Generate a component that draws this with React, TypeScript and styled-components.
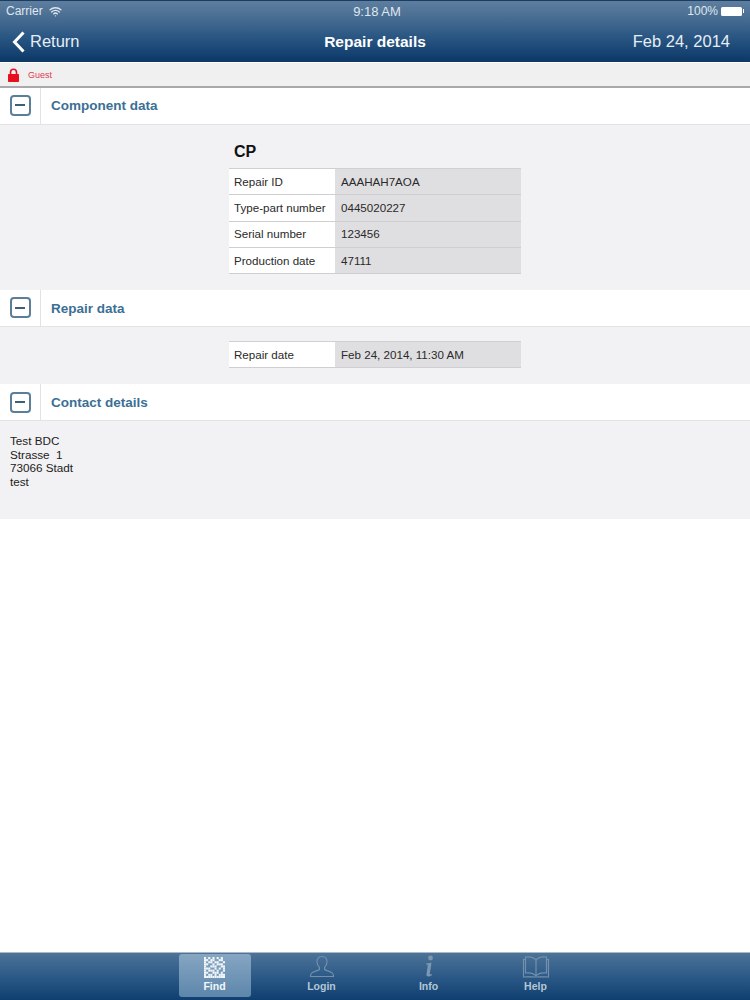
import React from 'react';
import styled, { createGlobalStyle } from 'styled-components';
import { Wifi } from 'lucide-react';

const GlobalStyle = createGlobalStyle`
  html, body {
    margin: 0;
    padding: 0;
    background: #fff;
    font-family: "Liberation Sans", Arial, sans-serif;
  }
`;

const Page = styled.div`
  width: 750px;
  height: 1000px;
  display: flex;
  flex-direction: column;
  overflow: hidden;
  background: #fff;
`;

const Header = styled.header`
  height: 62px;
  flex: none;
  box-sizing: border-box;
  border-top: 1px solid #1c3c62;
  border-bottom: 1px solid #123a63;
  background: linear-gradient(#5d7e9f 0%, #4b6f93 25%, #2a5683 60%, #0c3968 100%);
  color: #fff;
  display: flex;
  flex-direction: column;
`;

const StatusBar = styled.div`
  height: 20px;
  padding: 0 6px;
  display: flex;
  align-items: center;
  justify-content: space-between;
  font-size: 12px;
  color: #dfe7ef;
  position: relative;
`;

const StatusGroup = styled.div<{ $gap: number }>`
  display: flex;
  align-items: center;
  gap: ${(p) => p.$gap}px;
`;

const Clock = styled.span`
  position: absolute;
  left: 4px;
  right: 0;
  text-align: center;
  font-size: 13px;
`;

const Battery = styled.span`
  width: 21px;
  height: 9px;
  border-radius: 1.5px;
  background: #fff;
  margin-right: 2px;
  position: relative;

  &::after {
    content: '';
    position: absolute;
    right: -2px;
    top: 2px;
    width: 1px;
    height: 4px;
    background: #fff;
  }
`;

const NavBar = styled.div`
  flex: 1;
  display: grid;
  grid-template-columns: 1fr auto 1fr;
  align-items: center;
  padding: 1px 20px 0;
`;

const BackLink = styled.div`
  display: flex;
  align-items: center;
  margin-left: -8px;
  font-size: 16.5px;
  color: #e6edf4;
  gap: 5px;
`;

const NavTitle = styled.div`
  font-size: 15.5px;
  font-weight: bold;
  color: #fff;
`;

const NavDate = styled.div`
  font-size: 16.5px;
  text-align: right;
  color: #e6edf4;
`;

const UserBar = styled.div`
  height: 23px;
  flex: none;
  margin-top: 1px;
  background: #f1f0f1;
  border-bottom: 2px solid #a9a9ab;
  display: flex;
  align-items: center;
  padding-left: 7px;
  gap: 8px;
  font-size: 9px;
  color: #df3c4e;
`;

const SectionHead = styled.div`
  height: 36px;
  flex: none;
  background: #fff;
  border-bottom: 1px solid #e4e4e6;
  display: flex;
  align-items: stretch;
`;

const ToggleCell = styled.div`
  width: 41px;
  flex: none;
  box-sizing: border-box;
  border-right: 1px solid #e2e2e4;
  display: flex;
  align-items: center;
  justify-content: center;
`;

const ToggleBox = styled.div<{ $lift: number }>`
  width: 21px;
  height: 21px;
  margin-bottom: ${(p) => p.$lift}px;
  box-sizing: border-box;
  border: 2px solid #5b7f99;
  border-radius: 4px;
  display: flex;
  align-items: center;
  justify-content: center;

  &::before {
    content: '';
    width: 10px;
    height: 2px;
    background: #3c5f7b;
  }
`;

const SectionTitle = styled.div<{ $lift: number }>`
  padding: 0 0 ${(p) => p.$lift}px 10px;
  display: flex;
  align-items: center;
  font-size: 13.5px;
  font-weight: bold;
  color: #3b6f95;
`;

const SectionBody = styled.div<{ $height: number }>`
  height: ${(p) => p.$height}px;
  flex: none;
  box-sizing: border-box;
  background: #f2f1f3;
`;

const TableWrap = styled.div<{ $top: number }>`
  width: 292px;
  margin-left: 229px;
  padding-top: ${(p) => p.$top}px;
`;

const TableTitle = styled.div`
  font-size: 16px;
  font-weight: bold;
  color: #111;
  padding: 1px 0 0 5px;
  height: 27px;
  line-height: 22px;
`;

const Table = styled.div`
  border-top: 1px solid #d0d0d2;
`;

const Row = styled.div`
  display: grid;
  grid-template-columns: 106px 186px;
  height: 25.3px;
  border-bottom: 1px solid #cfcfd1;
  font-size: 11.6px;
  color: #2a2a2a;
`;

const LabelCell = styled.div`
  background: #fff;
  padding: 0 0 1px 5px;
  display: flex;
  align-items: center;
`;

const ValueCell = styled.div`
  background: #dfdee0;
  padding: 0 0 1px 6px;
  display: flex;
  align-items: center;
`;

const Address = styled.div`
  padding: 13px 0 0 10px;
  font-size: 11.7px;
  line-height: 13.7px;
  color: #222;
  white-space: pre;
`;

const Spacer = styled.div`
  flex: 1;
`;

const TabBar = styled.nav`
  height: 48px;
  flex: none;
  box-sizing: border-box;
  border-top: 1px solid #a9b9c6;
  background: linear-gradient(#4d7397 0%, #2f5c89 45%, #0f3f70 100%);
  display: flex;
  justify-content: center;
  padding: 1px 0 3px 0;
  gap: 35px;
`;

const Tab = styled.div<{ $active?: boolean }>`
  width: 72px;
  border-radius: 3px;
  background: ${(p) => (p.$active ? 'linear-gradient(#86a6c3, #5d86aa)' : 'transparent')};
  display: flex;
  flex-direction: column;
  align-items: center;
  justify-content: flex-end;
  font-size: 10.5px;
  font-weight: bold;
  color: ${(p) => (p.$active ? '#f2f6fa' : '#b4c6d6')};
  padding-bottom: 5px;
  box-sizing: border-box;
  gap: 2px;
`;

const BackChevron = () => (
  <svg width="13" height="22" viewBox="0 0 13 22" fill="none" stroke="#fff" strokeWidth="3">
    <polyline points="11.500,1.500 2.500,11 11.500,20.500" />
  </svg>
);

const Lock = () => (
  <svg width="13" height="14" viewBox="0 0 13 14">
    <path d="M3.500 6.500V4.200a3 3 0 0 1 6 0v2.300" fill="none" stroke="#e8101f" strokeWidth="1.600" />
    <rect x="1" y="6" width="11" height="8" rx="0.800" fill="#e8101f" />
  </svg>
);

// data matrix code, cells are hand placed from the reference
const matrix = [
  '1010101010',
  '1101100110',
  '1011011001',
  '1100101110',
  '1001110011',
  '1110010101',
  '1011101001',
  '1100111010',
  '1011010111',
  '1111111111',
];

const FindIcon = () => (
  <svg width="21" height="21" viewBox="0 0 20 20">
    {matrix.map((row, y) =>
      row.split('').map((c, x) =>
        c === '1' ? <rect key={`${x}-${y}`} x={x * 2} y={y * 2} width="2" height="2" fill="#f1f5f9" /> : null,
      ),
    )}
  </svg>
);

const LoginIcon = () => (
  <svg width="26" height="23" viewBox="0 0 26 23" fill="none" stroke="#7390ab" strokeWidth="1.200">
    <path d="M13 1.500c-3.200 0-5 2.300-5 5.300 0 2.400 1 4.400 2.400 5.500v2.200c-1.400 1.200-6.600 2-8.200 4-.6.800-.7 2-.7 3h23c0-1-.1-2.200-.7-3-1.600-2-6.800-2.800-8.200-4v-2.200C17 11.200 18 9.200 18 6.800c0-3-1.800-5.300-5-5.300z" />
  </svg>
);

const InfoIcon = () => (
  <svg width="14" height="23" viewBox="0 0 14 23" fill="#7c97b0">
    <circle cx="8.500" cy="3" r="2.400" />
    <path d="M4 8.500l5.500-.8-1.700 11c-.1.800.4 1 2.200.300l-.2 1.200c-2.400 1.600-5.800 2-5.300-1l1.300-9c.1-.7-.6-.8-1.800-.7z" />
  </svg>
);

const HelpIcon = () => (
  <svg width="28" height="23" viewBox="0 0 28 23" fill="none" stroke="#7390ab" strokeWidth="1.200">
    <path d="M14 5c-2-2.500-6-3.500-10.500-3v16c4.500-.5 8.500.5 10.500 3 2-2.500 6-3.500 10.500-3V2C20 1.500 16 2.500 14 5z" />
    <path d="M14 5v16M3.500 4.500H1.500v17.500c4-.5 9 0 12.500 0s8.500-.5 12.500 0V4.500h-2" />
  </svg>
);

const Section = ({ title, lift = 0, titleLift = 0 }: { title: string; lift?: number; titleLift?: number }) => (
  <SectionHead>
    <ToggleCell>
      <ToggleBox $lift={lift} />
    </ToggleCell>
    <SectionTitle $lift={titleLift}>{title}</SectionTitle>
  </SectionHead>
);

const componentRows = [
  ['Repair ID', 'AAAHAH7AOA'],
  ['Type-part number', '0445020227'],
  ['Serial number', '123456'],
  ['Production date', '47111'],
];

export default function App() {
  return (
    <Page>
      <GlobalStyle />
      <Header>
        <StatusBar>
          <StatusGroup $gap={6}>
            Carrier
            <Wifi size={13} strokeWidth={2.500} />
          </StatusGroup>
          <Clock>9:18 AM</Clock>
          <StatusGroup $gap={3}>
            100%
            <Battery />
          </StatusGroup>
        </StatusBar>
        <NavBar>
          <BackLink>
            <BackChevron />
            Return
          </BackLink>
          <NavTitle>Repair details</NavTitle>
          <NavDate>Feb 24, 2014</NavDate>
        </NavBar>
      </Header>
      <UserBar>
        <Lock />
        Guest
      </UserBar>

      <Section title="Component data" lift={2} titleLift={2} />
      <SectionBody $height={165}>
        <TableWrap $top={15}>
          <TableTitle>CP</TableTitle>
          <Table>
            {componentRows.map(([label, value]) => (
              <Row key={label}>
                <LabelCell>{label}</LabelCell>
                <ValueCell>{value}</ValueCell>
              </Row>
            ))}
          </Table>
        </TableWrap>
      </SectionBody>

      <Section title="Repair data" lift={1} />
      <SectionBody $height={57}>
        <TableWrap $top={14}>
          <Table>
            <Row>
              <LabelCell>Repair date</LabelCell>
              <ValueCell>Feb 24, 2014, 11:30 AM</ValueCell>
            </Row>
          </Table>
        </TableWrap>
      </SectionBody>

      <Section title="Contact details" />
      <SectionBody $height={98}>
        <Address>{'Test BDC\nStrasse  1\n73066 Stadt\ntest'}</Address>
      </SectionBody>

      <Spacer />

      <TabBar>
        <Tab $active>
          <FindIcon />
          Find
        </Tab>
        <Tab>
          <LoginIcon />
          Login
        </Tab>
        <Tab>
          <InfoIcon />
          Info
        </Tab>
        <Tab>
          <HelpIcon />
          Help
        </Tab>
      </TabBar>
    </Page>
  );
}
